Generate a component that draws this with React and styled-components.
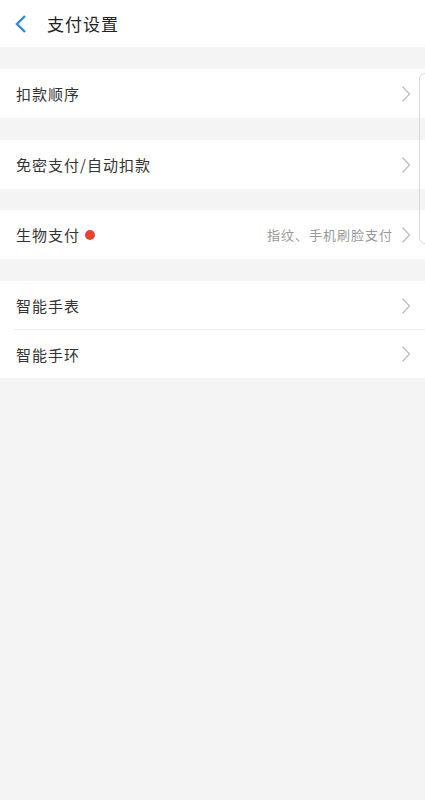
import React from "react";
import styled, { createGlobalStyle } from "styled-components";

const Global = createGlobalStyle`
  html, body { margin: 0; padding: 0; background: #f4f4f4; }
  body { font-family: "Noto Sans CJK SC", "Noto Sans", sans-serif; }
`;

const Page = styled.div`
  position: relative;
  width: 425px;
  min-height: 800px;
  background: #f4f4f4;
`;

const Header = styled.div`
  height: 47px;
  background: #fff;
  display: flex;
  align-items: center;
  padding-left: 14px;
  gap: 19px;
`;

const Title = styled.div`
  font-size: 17px;
  color: #222;
  letter-spacing: 1px;
`;

const Group = styled.div`
  margin-top: ${(p) => p.$gap}px;
  background: #fff;
`;

const Row = styled.div`
  box-sizing: border-box;
  height: ${(p) => (p.$h ? p.$h : 49)}px;
  display: flex;
  align-items: center;
  padding: 0 14px 0 16px;
  position: relative;
  ${(p) =>
    p.$divider &&
    `&::after { content: ""; position: absolute; left: 14px; right: 0; bottom: 0; height: 1px; background: #eeeeee; }`}
`;

const Label = styled.div`
  font-size: 15px;
  color: #333;
  letter-spacing: 1px;
  flex: 1;
  display: flex;
  align-items: center;
  gap: 5px;
`;

const Dot = styled.span`
  width: 10px;
  height: 10px;
  border-radius: 50%;
  background: #e9432f;
`;

const Hint = styled.div`
  font-size: 13px;
  color: #999;
  letter-spacing: 1px;
  margin-right: 8px;
`;

const EdgeHandle = styled.div`
  position: absolute;
  right: -6px;
  top: 73px;
  width: 10px;
  height: 169px;
  border: 1px solid #d8d8d8;
  border-radius: 6px;
  background: transparent;
`;

const Chevron = () => (
  <svg width="10" height="18" viewBox="0 0 10 18">
    <path d="M1.5 1.5 L8.5 9 L1.5 16.5" fill="none" stroke="#bdbdbd" strokeWidth="1.3" />
  </svg>
);

const Back = () => (
  <svg width="14" height="20" viewBox="0 0 14 20">
    <path d="M11 2 L3 10 L11 18" fill="none" stroke="#2d8ae0" strokeWidth="2.4" strokeLinejoin="miter" />
  </svg>
);

export default function App() {
  return (
    <Page>
      <Global />
      <Header>
        <Back />
        <Title>支付设置</Title>
      </Header>
      <Group $gap={22}>
        <Row>
          <Label>扣款顺序</Label>
          <Chevron />
        </Row>
      </Group>
      <Group $gap={22}>
        <Row>
          <Label>免密支付/自动扣款</Label>
          <Chevron />
        </Row>
      </Group>
      <Group $gap={21}>
        <Row>
          <Label>
            生物支付
            <Dot />
          </Label>
          <Hint>指纹、手机刷脸支付</Hint>
          <Chevron />
        </Row>
      </Group>
      <Group $gap={22}>
        <Row $divider>
          <Label>智能手表</Label>
          <Chevron />
        </Row>
        <Row $h={48}>
          <Label>智能手环</Label>
          <Chevron />
        </Row>
      </Group>
      <EdgeHandle />
    </Page>
  );
}
